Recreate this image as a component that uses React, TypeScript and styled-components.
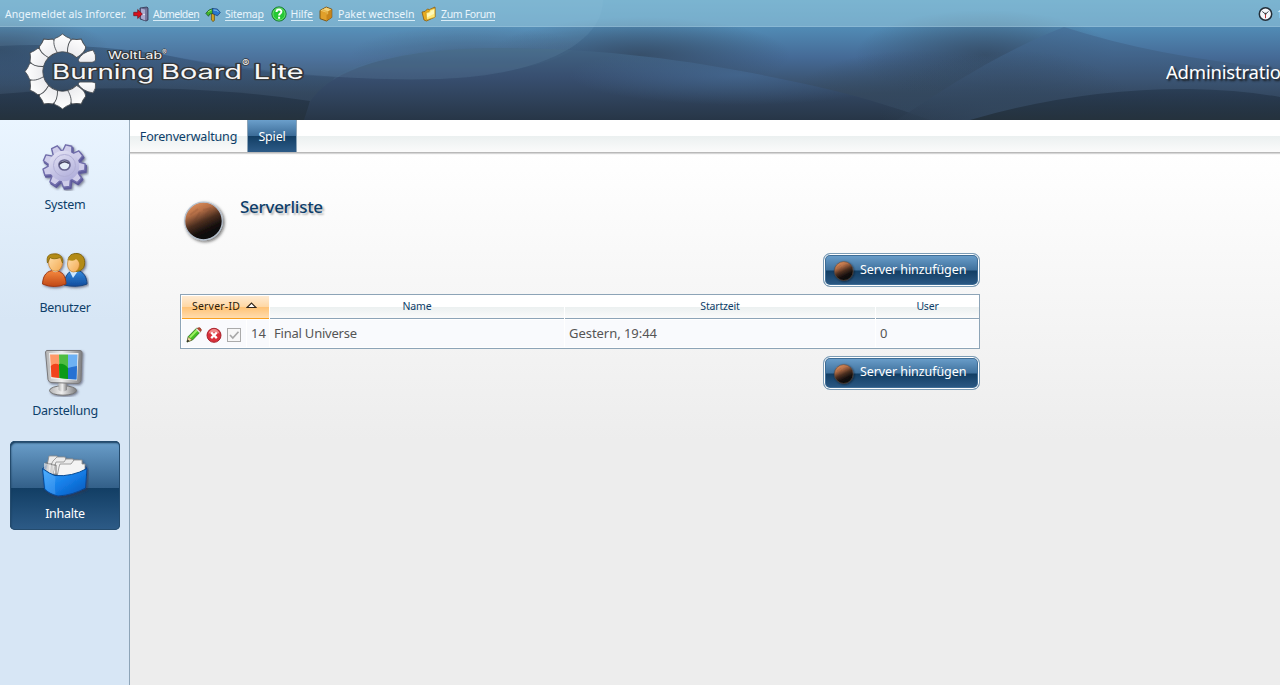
import React from "react";
import styled, { createGlobalStyle } from "styled-components";

const GlobalStyle = createGlobalStyle`
  * { box-sizing: border-box; }
  body {
    margin: 0;
    overflow: hidden;
    font-family: "Noto Sans", "Open Sans", sans-serif;
    font-size: 13px;
    color: #0d3e69;
  }
`;

const Page = styled.div`
  display: flex;
  flex-direction: column;
  width: 1280px;
  height: 685px;
  overflow: hidden;
`;

const Header = styled.header`
  position: relative;
  height: 120px;
  overflow: hidden;
  isolation: isolate;
`;

const Backdrop = styled.svg`
  position: absolute;
  inset: 0;
  z-index: -1;
`;

const UserPanel = styled.div`
  display: flex;
  align-items: center;
  height: 27px;
  padding: 2px 0 0 5px;
  background: rgba(170, 217, 235, 0.43);
  border-bottom: 1px solid rgba(190, 220, 240, 0.25);
  color: #e9f5fc;
  font-size: 10.5px;
  white-space: nowrap;
`;

const Greeting = styled.span<{ $w: number; $ls: number }>`
  width: ${(p) => p.$w}px;
  letter-spacing: ${(p) => p.$ls}px;
`;

const PanelItem = styled.div<{ $w: number; $ls: number }>`
  display: flex;
  align-items: center;
  gap: 4px;
  width: ${(p) => p.$w}px;
  letter-spacing: ${(p) => p.$ls}px;
  svg { flex: none; }
`;

const PanelLink = styled.a`
  line-height: 12px;
  border-bottom: 1px solid #d8ecf7;
`;

const Clock = styled.div`
  display: flex;
  align-items: center;
  gap: 4px;
  margin-left: auto;
  width: 22px;
  overflow: hidden;
`;

const Brand = styled.div`
  display: flex;
  justify-content: space-between;
  height: 93px;
`;

const AdminTitle = styled.div`
  width: 114px;
  padding-top: 31px;
  font-size: 18.5px;
  line-height: 27px;
  letter-spacing: -0.2px;
  color: #fff;
  white-space: nowrap;
  overflow: hidden;
  text-shadow: 2px 2px 2px rgba(20, 20, 20, 0.9);
`;

const Body = styled.div`
  display: flex;
  flex: 1;
`;

const Sidebar = styled.nav`
  width: 130px;
  padding: 12px 10px 0 10px;
  display: flex;
  flex-direction: column;
  gap: 14px;
  border-right: 1px solid #8da4b7;
  background: linear-gradient(#eaf5ff 0, #d7e6f5 200px, #d7e6f5 100%);
`;

const MenuItem = styled.a<{ $active?: boolean }>`
  display: flex;
  flex-direction: column;
  align-items: center;
  width: 110px;
  height: 89px;
  padding-top: 11px;
  border-radius: 5px;
  font-size: 12.5px;
  letter-spacing: -0.25px;
  ${(p) =>
    p.$active &&
    `color:#fff;
     background:linear-gradient(#6b9fcb 0,#336089 47px,#123e64 47px,#2d5b87 100%);
     box-shadow:inset 0 0 0 1px #244b6d, inset 1px 2px 2px #173a59;`}
`;

const MenuLabel = styled.span`
  margin-top: 5px;
  line-height: 18px;
`;

const Main = styled.main`
  flex: 1;
  background: linear-gradient(#fff 33px, #ededed 320px);
`;

const Tabs = styled.div`
  display: flex;
  height: 33px;
  border-bottom: 1px solid #b9b9b9;
  box-shadow: 0 1px 1px #d6d6d6;
  background: linear-gradient(#fff 16px, #ebf0f0 16px, #fbfbfb 32px);
`;

const Tab = styled.a<{ $active?: boolean; $w: number }>`
  width: ${(p) => p.$w}px;
  height: 32px;
  padding-top: 1px;
  text-align: center;
  line-height: 32px;
  font-size: 12.5px;
  letter-spacing: -0.18px;
  ${(p) =>
    p.$active &&
    `color:#fff;border-left:1px solid #8da4b7;border-right:1px solid #8da4b7;
     background:linear-gradient(#6b9fcb 0,#3b6b97 16px,#123e64 16px,#2d5b87 100%);`}
`;

const Content = styled.section`
  width: 800px;
  margin-left: 50px;
  padding-top: 44px;
  display: flex;
  flex-direction: column;
`;

const Headline = styled.div`
  display: flex;
  gap: 12px;
  height: 48px;
`;

const Title = styled.h2`
  margin: -2px 0 0;
  font-size: 17px;
  font-weight: 500;
  line-height: 24px;
  letter-spacing: -0.28px;
  text-shadow: 2px 2px 2px #b7b7b7;
`;

const BigButton = styled.button<{ $top: number; $lift: number }>`
  align-self: flex-end;
  display: flex;
  align-items: center;
  gap: 4px;
  width: 157px;
  height: 34px;
  margin: ${(p) => p.$top}px 0 0;
  padding: 0 0 0 8px;
  border: 1px solid #7c9cb5;
  border-radius: 7px;
  box-shadow: inset 0 0 0 1px #fff, inset 0 0 0 2px #3e6d96;
  background: linear-gradient(#6b9fcb 1px, #3f719d 16px, #123e64 17px, #2d5b87 32px);
  color: #fff;
  font: inherit;
  font-size: 12.5px;
  letter-spacing: -0.08px;
  white-space: nowrap;
  span { margin-top: -${(p) => p.$lift}px; }
  svg { margin-top: 2px; }
`;

const Table = styled.div`
  width: 800px;
  height: 55px;
  margin-top: 7px;
  padding: 1px;
  border: 1px solid #8da4b7;
  background: #fff;
`;

const HeadRow = styled.div`
  display: grid;
  grid-template-columns: 87px 294px 310px 103px;
  column-gap: 1px;
  height: 23px;
`;

const HeadCell = styled.div<{ $active?: boolean }>`
  display: flex;
  justify-content: center;
  align-items: center;
  gap: 6px;
  padding-bottom: 3px;
  font-size: 10.5px;
  letter-spacing: -0.18px;
  border-bottom: 1px solid #8da4b7;
  background: linear-gradient(#fff 11px, #ebf0f0 11px, #fbfbfb 22px);
  ${(p) =>
    p.$active &&
    `color:#2b1b08;border-bottom-color:#f9a01f;letter-spacing:0.2px;padding-right:2px;
     background:linear-gradient(#ffebd2 0,#ffd7a3 11px,#ffc274 11px,#ffdcae 22px);`}
`;

const Row = styled.div`
  display: grid;
  grid-template-columns: 64px 22px 294px 310px 103px;
  column-gap: 1px;
  height: 28px;
  padding-top: 1px;
`;

const Cell = styled.div<{ $ls?: number }>`
  display: flex;
  align-items: center;
  padding: 0 0 2px 4px;
  background: #f9fafd;
  color: #555;
  letter-spacing: ${(p) => p.$ls ?? 0}px;
  white-space: nowrap;
`;

const IconCell = styled(Cell)`
  gap: 4px;
  padding: 3px 0 0 4px;
`;

const panelIcon = { width: 16, height: 16, viewBox: "0 0 16 16" };

const ExitIcon = () => (
  <svg {...panelIcon}>
    <path d="M7 2l7-1 1 1v12l-2 1-6-2z" fill="#65678d" stroke="#333653" strokeWidth=".8" />
    <path d="M8 2.5l4 1v11l-4-2z" fill="#aaaace" />
    <path d="M12 3.5l2-1v11l-2 1z" fill="#77799e" />
    <path d="M.7 6.3h4V3.5L9.3 8l-4.6 4.5V9.7h-4z" fill="#d9101c" stroke="#710e1b" strokeWidth=".7" />
    <circle cx="11" cy="8.5" r=".7" fill="#fff" />
  </svg>
);

const SignpostIcon = () => (
  <svg {...panelIcon}>
    <path d="M6.400 7h3v7.500l-1.400 1L6.400 14z" fill="#d2a320" stroke="#60470c" strokeWidth=".7" />
    <path d="M.8 7.300L4 4l4-1.500 1.500 3L8 7.500 4.800 8 3.500 10.300z" fill="#3fb52b" stroke="#174f1c" strokeWidth=".7" />
    <path d="M7.300 2.500l5 .5 3 3.600-2.800 3.200L7.800 7.800z" fill="#2877ce" stroke="#173b76" strokeWidth=".7" />
    <path d="M8.500 4l3.300.3 1.700 1.800" stroke="#8dc6f5" fill="none" />
    <path d="M3 5.800l3.500-1.600" stroke="#96e06d" fill="none" />
  </svg>
);

const HelpIcon = () => (
  <svg {...panelIcon}>
    <circle cx="8" cy="8" r="7.1" fill="#25c834" stroke="#12742a" />
    <circle cx="8" cy="8" r="6.1" fill="none" stroke="#8be98e" strokeWidth=".7" />
    <path d="M5.5 6c.1-3.4 5.2-3.1 4.9-.2-.1 1.7-2.3 1.6-2.3 3.6" fill="none" stroke="#fff" strokeWidth="2" />
    <rect x="7.1" y="10.7" width="2" height="2" fill="#fff" />
  </svg>
);

const BoxIcon = () => (
  <svg {...panelIcon}>
    <path d="M2 4.5L8.2 1l5.6 2.2v8.2L8.5 15 2 12.7z" fill="#e0a02b" stroke="#79500e" strokeWidth=".9" />
    <path d="M2.4 4.6L8.2 1.5l5 2-5 3z" fill="#f4d37b" />
    <path d="M8.5 6.6l5-3v7.8l-5 3z" fill="#c8851a" />
    <path d="M5 3.3l5.2 2.1V8l-1.7.8V6.3L3.8 4.4z" fill="#e6b54b" />
  </svg>
);

const FolderIcon = () => (
  <svg {...panelIcon}>
    <path d="M1 6l3-.5L6.4 3l2 .6L14 1v10l-8.5 4L3 14z" fill="#e9ad20" stroke="#865c10" strokeWidth=".8" />
    <path d="M5 6.5l3-.7 1-2.200 5-1.400v9L5.500 14z" fill="#ffe878" stroke="#c08a14" strokeWidth=".6" />
    <path d="M6 7.500l3-.800 1-2 3-.9v4L6 11.500z" fill="#fff8b8" />
  </svg>
);

const ClockIcon = () => (
  <svg width="15" height="16" viewBox="0 0 15 16" style={{ flex: "none" }}>
    <circle cx="7.5" cy="8" r="6.2" fill="#f5f6fa" stroke="#232e38" strokeWidth="1.5" />
    <path d="M7.5 8L4.3 5.5M7.5 8l3-2.5" stroke="#44464d" />
    <path d="M7.5 7.5v4.7" stroke="#bd3031" />
    <circle cx="7.5" cy="7.8" r="1" fill="#444" />
  </svg>
);

const HeaderBackdrop = () => (
  <Backdrop width="1280" height="120" viewBox="0 0 1280 120">
    <defs>
      <linearGradient id="base" x1="0" y1="0" x2="0" y2="1">
        <stop offset="0" stopColor="#5898bd" />
        <stop offset=".25" stopColor="#5088b2" />
        <stop offset=".48" stopColor="#456a96" />
        <stop offset=".78" stopColor="#36495f" />
        <stop offset="1" stopColor="#2d3c51" />
      </linearGradient>
      <linearGradient id="dome" gradientUnits="userSpaceOnUse" x1="0" y1="48" x2="0" y2="120">
        <stop offset="0" stopColor="#416383" />
        <stop offset=".4" stopColor="#384f70" />
        <stop offset="1" stopColor="#273647" />
      </linearGradient>
      <radialGradient id="domeGlow">
        <stop offset="0" stopColor="#4c78a5" stopOpacity=".5" />
        <stop offset="1" stopColor="#4c78a5" stopOpacity="0" />
      </radialGradient>
      <clipPath id="domeClip">
        <path d="M304 120C309 76 380 48 500 48C620 48 725 66 810 85Q870 98 930 120z" />
      </clipPath>
      <linearGradient id="dark" x1="0" y1="0" x2="0" y2="1">
        <stop offset="0" stopColor="#22344a" stopOpacity=".6" />
        <stop offset="1" stopColor="#25323d" />
      </linearGradient>
      <linearGradient id="ridge" x1="0" y1="0" x2="0" y2="1">
        <stop offset="0" stopColor="#46709a" />
        <stop offset=".55" stopColor="#3b5575" />
        <stop offset="1" stopColor="#2a394b" />
      </linearGradient>
      <radialGradient id="shade">
        <stop offset="0" stopColor="#33485f" stopOpacity=".8" />
        <stop offset="1" stopColor="#33485f" stopOpacity="0" />
      </radialGradient>
      <linearGradient id="leftWave" x1="0" y1="0" x2="0" y2="1">
        <stop offset="0" stopColor="#34516f" stopOpacity=".5" />
        <stop offset="1" stopColor="#2c3f56" stopOpacity=".2" />
      </linearGradient>
    </defs>
    <rect width="1280" height="120" fill="url(#base)" />
    <ellipse cx="0" cy="50" rx="110" ry="35" fill="url(#shade)" />
    <ellipse cx="470" cy="55" rx="120" ry="30" fill="url(#shade)" opacity=".5" />
    <ellipse cx="640" cy="55" rx="150" ry="38" fill="url(#shade)" />
    <ellipse cx="985" cy="55" rx="130" ry="45" fill="url(#shade)" />
    <ellipse cx="920" cy="100" rx="130" ry="50" fill="url(#shade)" />
    <path d="M0 46Q80 42 165 55Q260 75 335 77L304 120H0z" fill="url(#leftWave)" />
    <path d="M304 120C309 76 380 48 500 48C620 48 725 66 810 85Q870 98 930 120z" fill="url(#dome)" />
    <ellipse cx="740" cy="75" rx="170" ry="30" fill="url(#domeGlow)" clipPath="url(#domeClip)" />
    <path d="M0 0H603C603 45 535 76 440 79C370 81 280 76 165 55Q80 42 0 46z" fill="#8fc0e0" fillOpacity=".1" />
    <path d="M335 77C380 80 430 79 440 79C500 75 551 65 573 50Q535 48 500 48C420 48 364 58 335 77z" fill="#4a7695" fillOpacity=".1" />
    <path d="M0 94Q90 86 180 89Q250 92 310 101L304 120H0z" fill="url(#dark)" />
    <path d="M897 120C945 88 1000 52 1064 27Q1160 58 1280 68V120z" fill="url(#ridge)" fillOpacity=".75" />
    <ellipse cx="1010" cy="115" rx="130" ry="65" fill="url(#shade)" />
    <path d="M970 120Q1080 88 1190 89Q1240 90 1280 97V120z" fill="url(#dark)" />
  </Backdrop>
);

const petals = [60, 90, 120, 150, 180, 210, 240, 270, 300];

const Logo = () => (
  <svg width="320" height="93" viewBox="0 27 320 93">
    <defs>
      <linearGradient id="petal" x1="0" y1="0" x2="0" y2="1">
        <stop offset="0" stopColor="#fff" />
        <stop offset="1" stopColor="#ebebee" />
      </linearGradient>
    </defs>
    <g fill="url(#petal)" stroke="#4a4e53" strokeWidth=".9" strokeLinejoin="round">
      <path d="M78 60Q82 52 93 50Q96.500 55 95.500 60Q94.500 62.300 92 62.300H79.500z" />
      <path d="M78 84Q82 91 93 93Q96.500 88 95.500 83.500Q94.500 82 92 82H79.500z" />
      {petals.map((angle) => (
        <path
          key={angle}
          transform={`translate(62.5 71.5) rotate(${angle + 90})`}
          d="M-5.200-19C-8.800-25-9.400-30-7.800-33Q-3.500-34.500 0-37.500Q3.500-34.500 7.800-33C9.400-30 8.800-25 5.200-19Q0-20.500-5.200-19z"
        />
      ))}
    </g>
    <g
      fontFamily="Inter, sans-serif"
      fill="#f7f7f7"
      stroke="#34383c"
      paintOrder="stroke"
      strokeLinejoin="round"
    >
      <text x="108" y="59" fontSize="10.5" strokeWidth="2" textLength="54" lengthAdjust="spacingAndGlyphs">WoltLab</text>
      <text x="162" y="55" fontSize="7" strokeWidth="1">®</text>
      <text x="52" y="78.5" fontSize="20" strokeWidth="2.6" textLength="102" lengthAdjust="spacingAndGlyphs">Burning</text>
      <text x="161" y="78.5" fontSize="20" strokeWidth="2.6" textLength="81" lengthAdjust="spacingAndGlyphs">Board</text>
      <text x="242" y="66.5" fontSize="11" strokeWidth="1.4">®</text>
      <text x="253.500" y="78.5" fontSize="20" strokeWidth="2.6" textLength="50" lengthAdjust="spacingAndGlyphs">Lite</text>
    </g>
  </svg>
);

const menuIcon = { width: 48, height: 48, viewBox: "0 0 48 48" };
const teeth = [0, 40, 80, 120, 160, 200, 240, 280, 320];

const GearIcon = () => (
  <svg {...menuIcon}>
    <defs>
      <linearGradient id="gear" x1="0" y1="0" x2=".5" y2="1">
        <stop offset="0" stopColor="#e7e6f6" />
        <stop offset="1" stopColor="#b3b1dc" />
      </linearGradient>
      <filter id="soft" x="-20%" y="-20%" width="150%" height="150%">
        <feDropShadow dx="1.3" dy="1.3" stdDeviation=".8" floodColor="#31324d" floodOpacity=".6" />
      </filter>
    </defs>
    <g filter="url(#soft)">
      <g fill="#5e5b9b" stroke="#5e5b9b" strokeWidth="1.6" strokeLinejoin="round" transform="translate(.6 .8)">
        {teeth.map((a) => (
          <path key={a} transform={`translate(23.5 24) rotate(${a + 13})`} d="M-5-13L-3.200-21H3.200L5-13z" />
        ))}
        <circle cx="23.5" cy="24" r="15.500" />
      </g>
      <g fill="#cfcdea" stroke="#706dab" strokeWidth="1.4" strokeLinejoin="round">
        {teeth.map((a) => (
          <path key={a} transform={`translate(23 23) rotate(${a + 13})`} d="M-5-13L-3.200-21H3.200L5-13z" />
        ))}
      </g>
      <circle cx="23" cy="23" r="15.300" fill="url(#gear)" />
    </g>
    <circle cx="23.500" cy="22.5" r="11" fill="none" stroke="#b2b0d6" />
    <ellipse cx="23.500" cy="22" rx="5.5" ry="5" fill="#e6eff9" stroke="#66648f" strokeWidth="1.7" />
    <path d="M18 21.500q5-5 10-1" fill="none" stroke="#454362" strokeWidth="1.5" />
  </svg>
);

const UsersIcon = () => (
  <svg {...menuIcon}>
    <defs>
      <linearGradient id="skin" x1="0" y1="0" x2="1" y2="1">
        <stop offset="0" stopColor="#ffe1ae" /><stop offset="1" stopColor="#f3a951" />
      </linearGradient>
      <linearGradient id="orange" x1="0" y1="0" x2="0" y2="1">
        <stop offset="0" stopColor="#f6893e" /><stop offset="1" stopColor="#c04716" />
      </linearGradient>
      <linearGradient id="blue" x1="0" y1="0" x2="0" y2="1">
        <stop offset="0" stopColor="#358ce0" /><stop offset="1" stopColor="#114c9d" />
      </linearGradient>
    </defs>
    <g filter="url(#soft)" transform="translate(0 2)">
      <path d="M23 37C24 27 28 22 35 22C43 23 46 30 46 36Q36 40 23 37z" fill="url(#blue)" stroke="#174681" />
      <path d="M28.500 23l8.500 0-5 7z" fill="#cce8ff" />
      <path d="M27 12C28 7 31 5.500 36 5.500C42 6 44.500 11 43.500 17Q42.500 23 35 23.500z" fill="#b38b17" stroke="#81670c" />
      <ellipse cx="32.500" cy="16" rx="6" ry="8" fill="url(#skin)" stroke="#c37c27" strokeWidth=".7" />
      <path d="M27 12q6 2 8-1q2 1 4 5l1-6-5-3h-5z" fill="#b38b17" />
      <path d="M1.500 36C2 27 6 22.500 13 22.500C22 22.500 25 29 25 36Q13 41 1.500 36z" fill="url(#orange)" stroke="#9c3b15" />
      <path d="M11 22.500q3 3.500 7 0v-2h-7z" fill="#ddd" />
      <ellipse cx="14.500" cy="14.500" rx="7" ry="8.800" fill="url(#skin)" stroke="#c37c27" strokeWidth=".7" />
      <path d="M6.500 15C5 8 8 5.500 14 6C21 6 22.500 11 21.500 15L19.500 9.500Q12 12 9 9.500z" fill="#b38b17" stroke="#81670c" strokeWidth=".8" />
    </g>
  </svg>
);

const MonitorIcon = () => (
  <svg {...menuIcon}>
    <defs>
      <linearGradient id="metal" x1="0" y1="0" x2="1" y2="0">
        <stop offset="0" stopColor="#b4b4b4" /><stop offset=".45" stopColor="#efefef" /><stop offset="1" stopColor="#7e7e80" />
      </linearGradient>
    </defs>
    <g filter="url(#soft)" transform="translate(0 -1)">
      <ellipse cx="22" cy="42.5" rx="13.5" ry="4.700" fill="url(#metal)" stroke="#747474" />
      <path d="M17.500 34h8.500v8q-5 3-8.500 0z" fill="url(#metal)" />
      <path d="M5.500 2.5h33.500q2 0 2 2l-1 28q-1 3-3 3l-27-1q-2 0-3-3L4.500 4z" fill="url(#metal)" stroke="#79797b" />
      <path d="M8 5h29.500l-1.500 27.500-26-2z" fill="#eee" />
      <path d="M9 6.500H18l.5 23.500-8-1z" fill="#ff9969" /><path d="M9.800 18q4-4 8.700-1v13l-8-1z" fill="#f1421a" />
      <path d="M18 6.500h9v24.500l-8.500-1z" fill="#4fbd43" /><path d="M18 16q5-1 9 4v11l-8.500-1z" fill="#0e9a15" />
      <path d="M27 6.500h9.500l-1 25-8.500-.500z" fill="#6db1f4" /><path d="M27 20q3-1 9 -2l-.5 13.500-8.500-.500z" fill="#2571d3" />
    </g>
  </svg>
);

const FilesIcon = () => (
  <svg {...menuIcon}>
    <defs>
      <linearGradient id="bin" x1="0" y1="0" x2="1" y2="1">
        <stop offset="0" stopColor="#3aa6ff" /><stop offset=".5" stopColor="#147ee8" /><stop offset="1" stopColor="#0755b8" />
      </linearGradient>
    </defs>
    <g filter="url(#soft)">
      <path d="M2 16L10 9l33 3 3 4-2 22z" fill="#063e88" />
      <g fill="#ececec" stroke="#8d8d8d" strokeWidth=".8" strokeLinejoin="round">
        <path d="M7 9L8 4h8l1 3h15v15H5z" />
        <path d="M11 11l1-2 4-4h8l1 3h12v14H9z" />
        <path d="M14 13l1-3 8 0 2-3h7l1 3h8v12H12z" />
        <path d="M18 15l1-3h11l3-4h8l0 4h3v9l-9 4H16z" fill="#f4f4f4" />
      </g>
      <path d="M4 11h3v9M8 12h3v9M12 13h3v9" fill="none" stroke="#777" strokeWidth="1" />
      <path d="M3 11v7l9 4 2-8z" fill="#e5e5e5" opacity=".7" />
      <path d="M1.500 16.500Q9 22 14 23.500Q31 25 46 16.500L44.500 36Q32 43 17 44Q8 42 3.500 37z" fill="url(#bin)" stroke="#054993" />
      <path d="M2.500 18.500q8 5 12 6-1 9 0 18-7-2-10-6z" fill="#8fcbff" opacity=".25" />
    </g>
  </svg>
);

const Planet = ({ size }: { size: number }) => (
  <svg width={size} height={size} viewBox="0 0 48 48">
    <defs>
      <linearGradient id="planet" x1=".25" y1="0" x2=".72" y2="1">
        <stop offset="0" stopColor="#e0915e" />
        <stop offset=".25" stopColor="#b56f47" />
        <stop offset=".5" stopColor="#4d2f20" />
        <stop offset=".72" stopColor="#15100e" />
        <stop offset="1" stopColor="#050505" />
      </linearGradient>
      <filter id="planetShadow" x="-20%" y="-20%" width="150%" height="150%">
        <feDropShadow dx="1.500" dy="1.500" stdDeviation="1.8" floodColor="#111" floodOpacity=".6" />
      </filter>
    </defs>
    <circle cx="23.5" cy="24" r="18.8" fill="url(#planet)" stroke={size > 30 ? "#b4c0ce" : "#5e4a40"} strokeWidth="1.2" filter="url(#planetShadow)" />
    <path d="M10 18l8-6M14 25l6-10M23 13l8-2M25 19l5-6" stroke="#6e3e28" strokeOpacity=".15" strokeWidth="2" />
  </svg>
);

const PencilIcon = () => (
  <svg {...panelIcon}>
    <path d="M1 15l1.300-5.500L10.500 1.200 14.700 4.500 6.500 13z" fill="#45bf20" stroke="#2b6a1c" strokeWidth=".8" />
    <path d="M3.800 10.600l7-7.300" stroke="#9cf062" strokeWidth="2" />
    <path d="M1 15l1.300-5L6 13z" fill="#f4dda1" stroke="#75603b" strokeWidth=".5" />
    <path d="M.8 15.200l.8-2.700 1.800 1.500z" fill="#222" />
    <path d="M9.800 2.300L11.5.8l3.900 3L13.500 6z" fill="#e6e0da" />
    <path d="M11.200 1.200Q14.200-.8 15.600 3L14.400 4.600z" fill="#bd4b32" stroke="#7a3020" strokeWidth=".5" />
  </svg>
);

const DeleteIcon = () => (
  <svg {...panelIcon}>
    <circle cx="8" cy="8.300" r="7" fill="#d9303a" stroke="#a92630" />
    <path d="M2.500 6.500Q4 2 8 2t5.500 4.500Q8 4.500 2.500 6.500z" fill="#f08a8a" />
    <path d="M5.200 5.500l5.600 5.600M10.800 5.500l-5.600 5.600" stroke="#fff" strokeWidth="2.300" />
  </svg>
);

const CheckIcon = () => (
  <svg {...panelIcon}>
    <rect x="1.5" y="1.5" width="13" height="13" fill="#f7f7f7" stroke="#ababab" />
    <path d="M4 8l2.8 3L12.5 4.7" fill="none" stroke="#a8a8a8" strokeWidth="1.7" />
  </svg>
);

const SortIcon = () => (
  <svg width="11" height="7" viewBox="0 0 11 7">
    <path d="M1 5.5L5.5 1 10 5.5z" fill="#fff" stroke="#33261a" strokeWidth="1.100" />
  </svg>
);

const links = [
  { label: "Abmelden", icon: <ExitIcon />, w: 72, ls: -0.55 },
  { label: "Sitemap", icon: <SignpostIcon />, w: 65.5, ls: -0.25 },
  { label: "Hilfe", icon: <HelpIcon />, w: 47.5, ls: -0.1 },
  { label: "Paket wechseln", icon: <BoxIcon />, w: 103, ls: 0.03 },
  { label: "Zum Forum", icon: <FolderIcon />, w: 80, ls: -0.35 },
];

const menu = [
  { label: "System", icon: <GearIcon /> },
  { label: "Benutzer", icon: <UsersIcon /> },
  { label: "Darstellung", icon: <MonitorIcon /> },
  { label: "Inhalte", icon: <FilesIcon />, active: true },
];

const AddServer = ({ top, lift }: { top: number; lift: number }) => (
  <BigButton $top={top} $lift={lift}>
    <Planet size={24} />
    <span>Server hinzufügen</span>
  </BigButton>
);

export default function App() {
  return (
    <Page>
      <GlobalStyle />
      <Header>
        <HeaderBackdrop />
        <UserPanel>
          <Greeting $w={128} $ls={0.06}>Angemeldet als Inforcer.</Greeting>
          {links.map((l) => (
            <PanelItem key={l.label} $w={l.w} $ls={l.ls}>
              {l.icon}
              <PanelLink>{l.label}</PanelLink>
            </PanelItem>
          ))}
          <Clock><ClockIcon />1</Clock>
        </UserPanel>
        <Brand>
          <Logo />
          <AdminTitle>Administratio</AdminTitle>
        </Brand>
      </Header>
      <Body>
        <Sidebar>
          {menu.map((m) => (
            <MenuItem key={m.label} $active={m.active}>
              {m.icon}
              <MenuLabel>{m.label}</MenuLabel>
            </MenuItem>
          ))}
        </Sidebar>
        <Main>
          <Tabs>
            <Tab $w={117}>Forenverwaltung</Tab>
            <Tab $w={50} $active>Spiel</Tab>
          </Tabs>
          <Content>
            <Headline>
              <Planet size={48} />
              <Title>Serverliste</Title>
            </Headline>
            <AddServer top={8} lift={2} />
            <Table>
              <HeadRow>
                <HeadCell $active>Server-ID<SortIcon /></HeadCell>
                <HeadCell>Name</HeadCell>
                <HeadCell>Startzeit</HeadCell>
                <HeadCell>User</HeadCell>
              </HeadRow>
              <Row>
                <IconCell><PencilIcon /><DeleteIcon /><CheckIcon /></IconCell>
                <Cell>14</Cell>
                <Cell $ls={-0.22}>Final Universe</Cell>
                <Cell $ls={-0.04}>Gestern, 19:44</Cell>
                <Cell>0</Cell>
              </Row>
            </Table>
            <AddServer top={7} lift={4} />
          </Content>
        </Main>
      </Body>
    </Page>
  );
}
